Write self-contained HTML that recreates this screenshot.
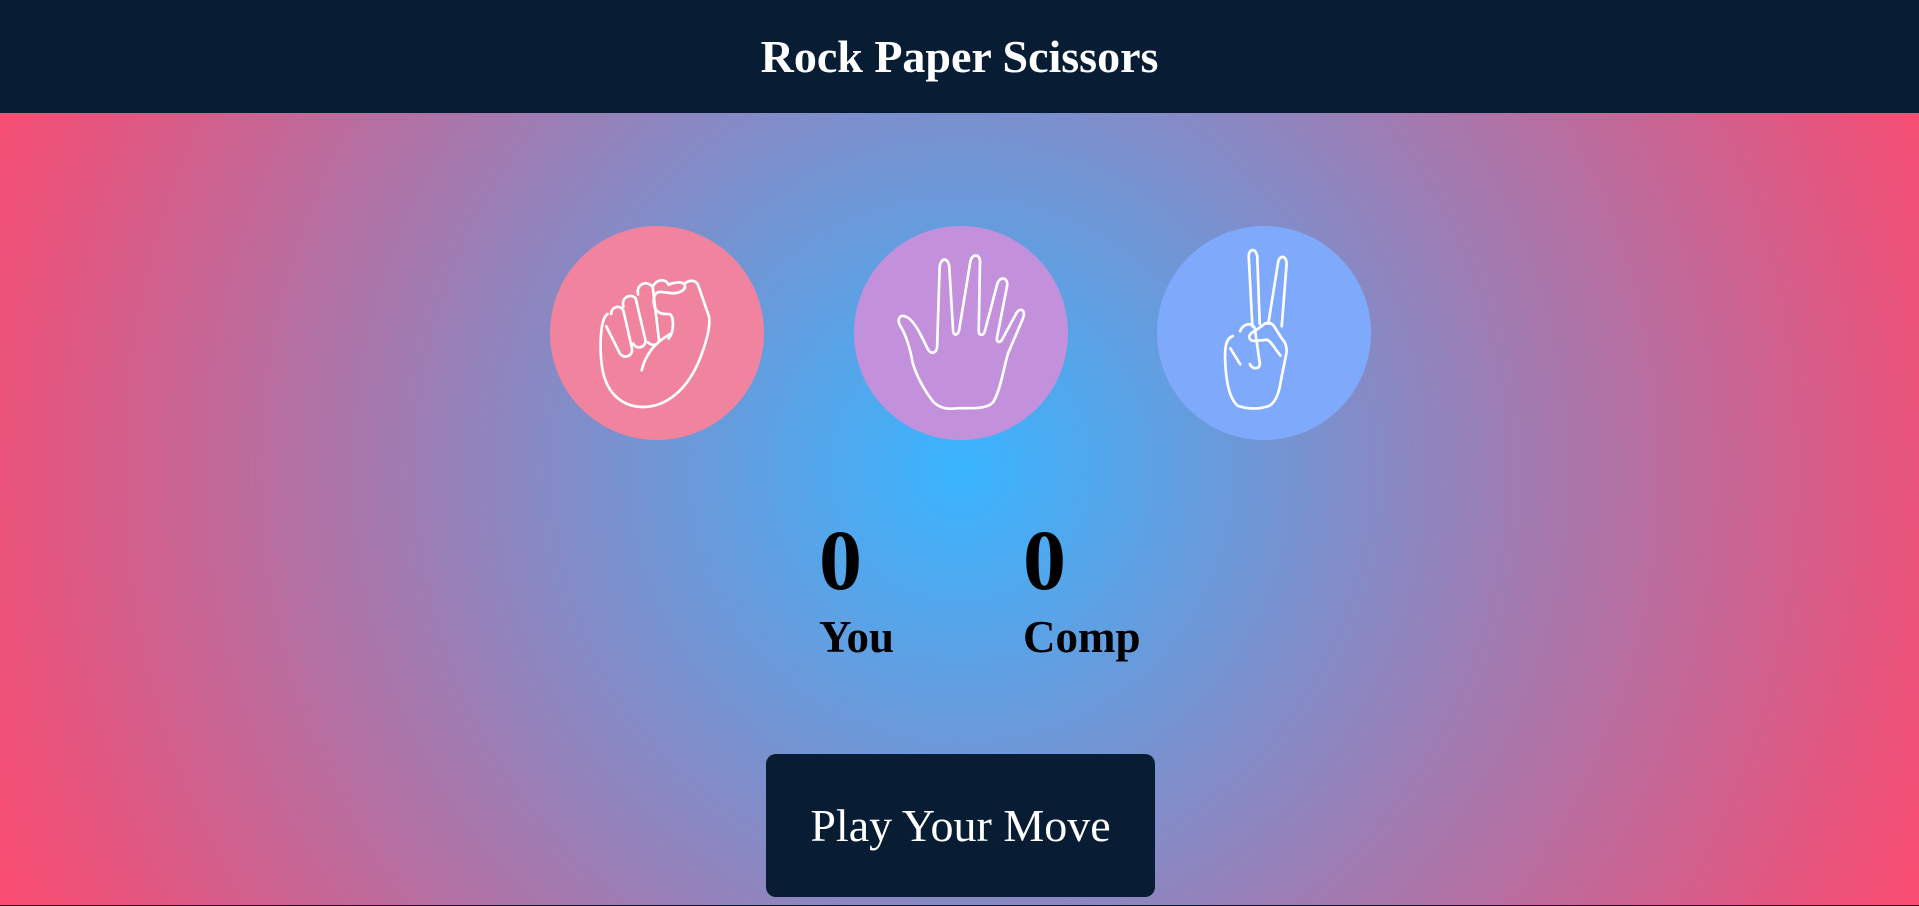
<!DOCTYPE html>
<html><head><meta charset="utf-8"><style>
*{margin:0;padding:0;box-sizing:border-box}
html,body{width:1919px;height:906px;overflow:hidden;background:#0a1a2e}
.page{position:absolute;left:0;top:0;width:1919px;height:905px;
background:radial-gradient(circle 961px at 961px 470px,#39b5ff 0%,#ea527a 100%,#ff4a6e 112%);
font-family:"Liberation Serif",serif}
header{position:absolute;left:0;top:0;width:1919px;height:113px;background:#081c33;color:#fff;
font-weight:bold;font-size:46px;text-align:center;line-height:113px}
.c{position:absolute;top:226px;width:214px;height:214px;border-radius:50%}
.c svg{width:214px;height:214px}
.sc{position:absolute;font-weight:bold;color:#000}
.n{font-size:86px;top:510px;line-height:100px}
.l{font-size:45px;top:609px;line-height:56px}
.btn{position:absolute;left:766px;top:754px;width:389px;height:143px;background:#081c33;border-radius:10px;
color:#fff;font-size:46px;text-align:center;line-height:143px}
</style></head><body><div class="page">
<header>Rock Paper Scissors</header>

<div class="c" style="left:550px;background:#f0849f">
<svg viewBox="0 0 175 175" fill="none" stroke="#fff" stroke-width="2.2" stroke-linecap="round" stroke-linejoin="round">
<path d="M47,72 C41,76 40,100 43,118 C47,138 60,148 76,148 C95,148 112,134 122,110 C130,90 131,80 130,74 L121,48 C119,44 114,44 110,47"/>
<path d="M50,72 C50,66 57,64 60,69 L67,100 C68,107 60,109 57,104 L46,82"/>
<path d="M60,66 C58,58 66,55 70,59 L78,93 C79,99 71,102 68,96"/>
<path d="M72,56 C70,47 80,44 84,50 L89,92 C90,97 84,99 80,95"/>
<path d="M84,50 C86,44 94,42 97,48 C102,46 108,45 110,48 C112,52 106,55 100,55 L92,54 C86,53 84,58 85,64 C86,70 90,72 95,72 L98,72 C102,75 101,88 97,92"/>
<path d="M75,118 C78,105 86,95 99,88"/>
</svg></div>

<div class="c" style="left:854px;background:#c390dc">
<svg viewBox="0 0 175 175" fill="none" stroke="#fff" stroke-width="2.2" stroke-linecap="round" stroke-linejoin="round">
<path d="M115,142 C120,132 122,118 126,104 L138,76 C141,69 136,66 133,71 L121,93 C119,96 116,95 117,91 L125,50 C127,42 119,40 117,48 L107,86 C106,90 102,90 102,86 L103,31 C104,22 96,22 95,30 L86,85 C85,90 81,90 81,85 L78,35 C78,25 70,25 70,35 L68,98 C68,104 63,106 60,100 C55,90 49,76 42,74 C37,72 35,77 38,82 C42,88 46,100 48,112 C52,125 58,135 65,144 C72,150 78,150 85,149 L96,149 C106,149 113,147 115,142 Z"/>
</svg></div>

<div class="c" style="left:1157px;background:#7faafc">
<svg viewBox="0 0 175 175" fill="none" stroke="#fff" stroke-width="2.2" stroke-linecap="round" stroke-linejoin="round">
<path d="M78,82 L75,25 C75,18 81,18 82,25 L84,80"/>
<path d="M91,80 L99,30 C100,23 106,24 106,31 L102,82"/>
<path d="M68,86 C70,80 78,78 80,84 L84,112 C85,117 78,118 76,113"/>
<path d="M62,90 C56,92 55,100 56,115 C57,130 60,142 66,147 C74,150 84,150 92,147 C98,143 100,135 101,128 L106,103 C106,98 105,95 102,92 L97,84 C95,80 92,78 88,80 L80,86 C74,88 74,94 80,94 L90,93 C94,95 96,100 101,106"/>
<path d="M60,100 L68,113"/>
</svg></div>

<div class="sc n" style="left:819px">0</div>
<div class="sc n" style="left:1023px">0</div>
<div class="sc l" style="left:819px">You</div>
<div class="sc l" style="left:1023px">Comp</div>

<div class="btn">Play Your Move</div>
</div></body></html>
